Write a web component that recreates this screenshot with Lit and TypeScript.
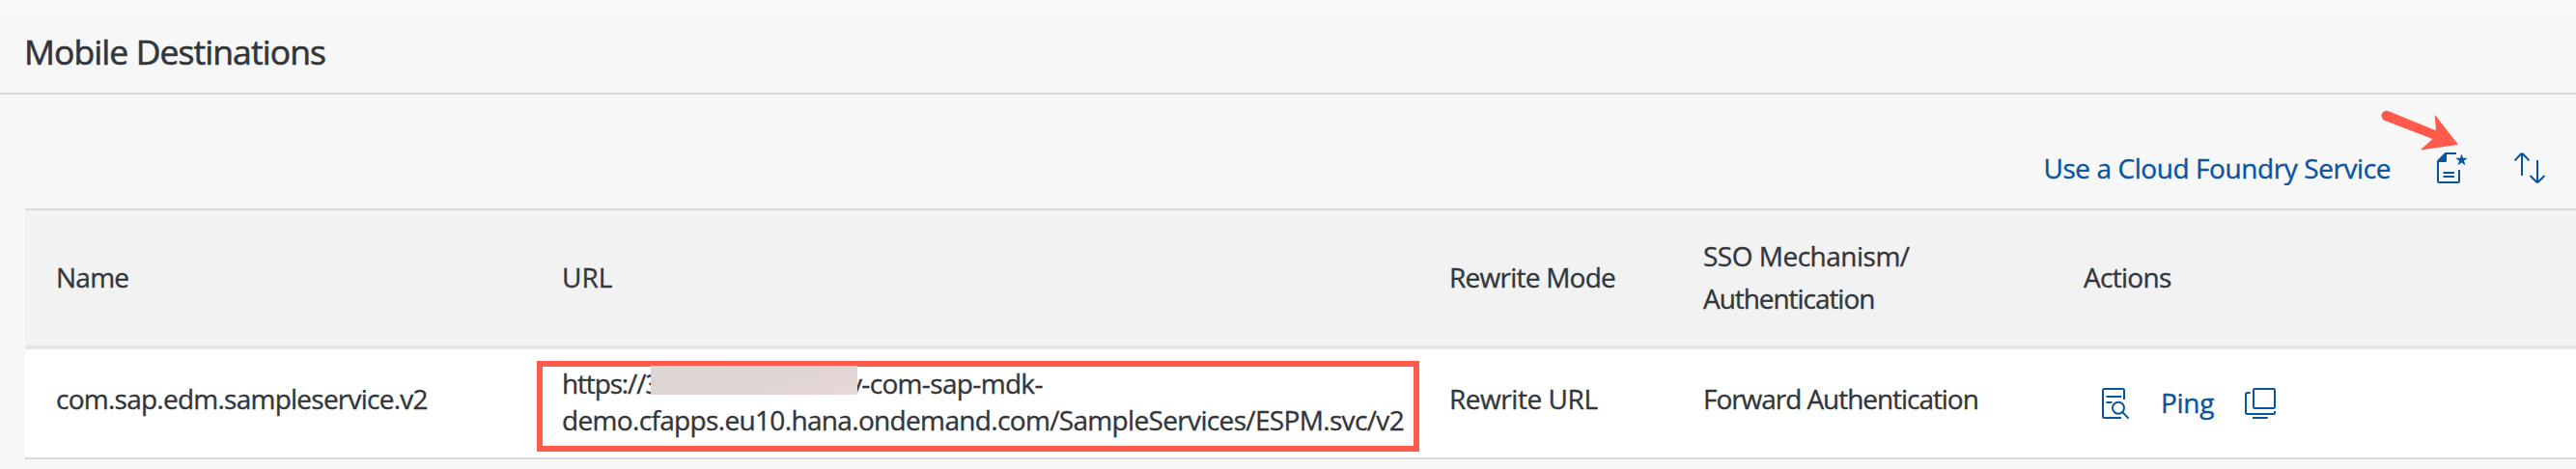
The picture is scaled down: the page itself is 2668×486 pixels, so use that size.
import { LitElement, html, css, svg } from "lit";
import { customElement, property } from "lit/decorators.js";

const ICONS: Record<string, unknown> = {
  create: svg`
    <path d="M10 1H20M1 9V29.5Q1 31 2.5 31H21.500Q23 31 23 29.500V18M6.500 21H18M6.500 25H18" />
    <path class="solid" d="M0 8.500 8.500 0H10V8.500Q10 10 8.500 10H0Z" />
    <path class="solid" d="M25.500 1.300 27 5.700H31.800L28 8.500 29.400 13.200 25.500 10.400 21.600 13.200 23 8.500 19.200 5.700H24Z" />`,
  sort: svg`
    <path d="M8 24V1M.6 8.400 6.800 1.800Q8 .6 9.200 1.800L15.500 8.400M24 8V31M16.500 24 22.800 30.200Q24 31.400 25.200 30.200L31.500 24" />`,
  inspect: svg`
    <path d="M23 12V2.500Q23 1 21.500 1H2.500Q1 1 1 2.500V29.500Q1 31 2.500 31H20M4.500 9H20.200M4.500 15H10.500" />
    <circle cx="17" cy="20.700" r="6" />
    <path d="M21.300 25 27.600 31.600" />`,
  copy: svg`
    <rect x="9" y="1" width="22" height="20" rx="1.200" />
    <path d="M5.700 5H2.500Q1 5 1 6.500V25.500Q1 27 2.500 27H29.500Q31 27 31 25.500V24M8 31H23.700" />`,
};

@customElement("line-icon")
class LineIcon extends LitElement {
  @property() name = "";
  static styles = css`
    :host { display: block; width: 32px; height: 32px; flex: none; }
    svg { display: block; overflow: visible; fill: none; stroke: #0854a0; stroke-width: 2; }
    .solid { fill: #0854a0; stroke: none; }
  `;
  render() {
    return html`<svg width="32" height="32" viewBox="0 0 32 32">${ICONS[this.name]}</svg>`;
  }
}

@customElement("app-root")
class AppRoot extends LitElement {
  static styles = css`
    :host {
      display: block;
      position: relative;
      box-sizing: border-box;
      height: 486px;
      overflow: hidden;
      background: #f7f7f7;
      color: #32363a;
      font: 28px/44px "Open Sans", "Noto Sans", sans-serif;
      white-space: nowrap;
      -webkit-text-stroke: 0.35px currentColor;
    }
    .strip { height: 10px; background: #fafafa; }
    .title {
      box-sizing: border-box;
      height: 88px;
      margin: 0;
      padding: 19px 0 0 25px;
      border-bottom: 2px solid #d9d9d9;
      font-size: 35.5px;
      font-weight: 400;
      line-height: 48px;
      letter-spacing: -0.92px;
      -webkit-text-stroke: 0.6px currentColor;
    }
    .toolbar {
      display: flex;
      justify-content: flex-end;
      align-items: center;
      box-sizing: border-box;
      height: 118px;
      padding: 34px 32px 0 0;
      color: #0854a0;
    }
    .service { letter-spacing: -0.42px; margin: -1px 48px 0 0; }
    .sort { margin-left: 48px; }
    .table { margin-left: 26px; }
    .row { display: grid; grid-template-columns: 524px 919px 263px 394px 1fr; }
    .row > div { padding-left: 32px; }
    .head {
      align-items: center;
      box-sizing: border-box;
      height: 146px;
      padding-bottom: 2px;
      border-top: 2px solid #d9d9d9;
      border-bottom: 4px solid #e5e5e5;
      background: #f2f2f2;
    }
    .body {
      box-sizing: border-box;
      height: 114px;
      border-bottom: 2px solid #d9d9d9;
      background: #fff;
    }
    .name { letter-spacing: -0.75px; }
    .mode { letter-spacing: -0.75px; }
    .body .mode { letter-spacing: -0.45px; }
    .sso { letter-spacing: -0.5px; }
    .tight, .sso2 { letter-spacing: -1.05px; }
    .act { letter-spacing: -0.7px; }
    .body .name, .body .mode, .body .sso2 { padding-top: 29px; }
    .url { position: relative; line-height: 38px; }
    .body .url { padding-top: 16px; letter-spacing: -0.66px; }
    .first { display: flex; }
    .start { width: 104px; letter-spacing: -1.15px; }
    .hidden { width: 193px; }
    .smudge {
      position: absolute;
      left: 124px;
      top: 17px;
      width: 214px;
      height: 30px;
      background: linear-gradient(165deg, #dcd5d4 0%, #ddd4d3 35%, #e0d4d4 60%, #e9d9d9 100%);
    }
    .frame {
      position: absolute;
      left: 6px;
      top: 12px;
      box-sizing: border-box;
      width: 914px;
      height: 94px;
      border: 6px solid #ff5a4c;
    }
    .row > .actions {
      display: flex;
      align-items: flex-start;
      padding: 40px 0 0 51px;
      color: #0854a0;
    }
    .ping { margin: -7px 0 0 29px; width: 87px; letter-spacing: -0.3px; }
    .arrow { position: absolute; left: 2460px; top: 108px; fill: #ff5a4c; }
  `;

  render() {
    return html`
      <div class="strip"></div>
      <h1 class="title">Mobile Destinations</h1>
      <div class="toolbar">
        <span class="service">Use a Cloud Foundry Service</span>
        <line-icon name="create"></line-icon>
        <line-icon class="sort" name="sort"></line-icon>
      </div>
      <div class="table">
        <div class="row head">
          <div class="name">Name</div>
          <div class="url">URL</div>
          <div class="mode">Rewrite Mode</div>
          <div class="sso">SSO Mechanism/<br /><span class="tight">Authentication</span></div>
          <div class="act">Actions</div>
        </div>
        <div class="row body">
          <div class="name">com.sap.edm.sampleservice.v2</div>
          <div class="url">
            <div class="frame"></div>
            <div class="first">
              <span class="start">https://3</span><span class="hidden"></span><span>v-com-sap-mdk-</span>
            </div>
            <div>demo.cfapps.eu10.hana.ondemand.com/SampleServices/ESPM.svc/v2</div>
            <div class="smudge"></div>
          </div>
          <div class="mode">Rewrite URL</div>
          <div class="sso2">Forward Authentication</div>
          <div class="actions">
            <line-icon name="inspect"></line-icon>
            <span class="ping">Ping</span>
            <line-icon name="copy"></line-icon>
          </div>
        </div>
      </div>
      <svg class="arrow" width="90" height="50" viewBox="2460 108 90 50">
        <path d="M2474 115.300 2523 135.300 2521.700 118.700 2546.200 150 2506.700 155.500 2519.500 144 2469.500 124.700A5 5 0 0 1 2474 115.300Z" />
      </svg>
    `;
  }
}
